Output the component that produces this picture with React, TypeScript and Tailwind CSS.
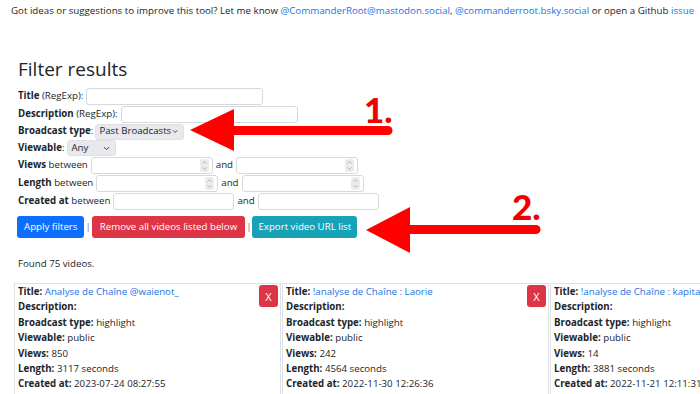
import React from 'react';
import { ChevronDown, ChevronUp } from 'lucide-react';

const link = 'text-[#1a73e8]';

const TextBox = ({ className }: { className: string }) => (
  <div className={`h-[17px] border border-[#d6d9dc] rounded-[3px] bg-white ${className}`} />
);

const NumberBox = ({ className }: { className: string }) => (
  <div className={`h-[17px] border border-[#d6d9dc] rounded-[3px] bg-white flex items-center justify-end pr-[3px] ${className}`}>
    <div className="w-[9px] h-[13px] rounded-[2px] bg-[#ececec] flex flex-col items-center justify-center text-[#8a8a8a]">
      <ChevronUp size={7} strokeWidth={2} />
      <ChevronDown size={7} strokeWidth={2} className="-mt-[1px]" />
    </div>
  </div>
);

const SelectBox = ({ value, className }: { value: string; className: string }) => (
  <div className={`h-[16px] rounded-[3px] bg-[#e9e9ed] border border-[#e0e0e4] flex items-center justify-between pl-[3px] pr-[4px] whitespace-nowrap ${className}`}>
    <span>{value}</span>
    <ChevronDown size={9} strokeWidth={2.5} className="text-[#333]" />
  </div>
);

interface Video {
  title: string;
  type: string;
  viewable: string;
  views: string;
  length: string;
  created: string;
}

const videos: Video[] = [
  { title: 'Analyse de Chaîne @waienot_', type: 'highlight', viewable: 'public', views: '850', length: '3117 seconds', created: '2023-07-24 08:27:55' },
  { title: '!analyse de Chaîne : Laorie', type: 'highlight', viewable: 'public', views: '242', length: '4564 seconds', created: '2022-11-30 12:26:36' },
  { title: '!analyse de Chaîne : kapitaine', type: 'highlight', viewable: 'public', views: '14', length: '3881 seconds', created: '2022-11-21 12:11:31' },
];

const VideoCard = ({ video }: { video: Video }) => (
  <div className="w-[267px] shrink-0 h-[130px] border border-[#dee2e6] pl-[3px] pr-[2px] leading-[15.4px] whitespace-nowrap overflow-hidden">
    <button className="float-right mt-[1px] w-[19px] h-[22px] rounded-[3px] bg-[#dc3545] text-white text-[11px] leading-none">X</button>
    <div><b>Title:</b> <span className={link}>{video.title}</span></div>
    <div><b>Description:</b></div>
    <div><b>Broadcast type:</b> {video.type}</div>
    <div><b>Viewable:</b> {video.viewable}</div>
    <div><b>Views:</b> {video.views}</div>
    <div><b>Length:</b> {video.length}</div>
    <div><b>Created at:</b> {video.created}</div>
  </div>
);

export default function App() {
  return (
    <div className="relative w-[700px] h-[394px] overflow-hidden bg-white text-[#212529] font-['Open_Sans',sans-serif] text-[9.7px]">
      <div className="pl-[18px] pt-[3px]">
        <p className="-ml-[7px] text-[9.72px] leading-[15px] whitespace-nowrap">
          Got ideas or suggestions to improve this tool? Let me know{' '}
          <a className={link}>@CommanderRoot@mastodon.social</a>,{' '}
          <a className={link}>@commanderroot.bsky.social</a> or open a Github <a className={link}>issue</a>
        </p>
        <h2 className="mt-[39px] text-[19px] leading-[25px]">Filter results</h2>

        <div className="mt-[5px] flex flex-col">
          <div className="flex items-center h-[18px]">
            <b>Title</b>&nbsp;(RegExp):
            <TextBox className="ml-[3px] w-[177px]" />
          </div>
          <div className="flex items-center h-[18px]">
            <b>Description</b>&nbsp;(RegExp):
            <TextBox className="ml-[3px] w-[177px]" />
          </div>
          <div className="flex items-center h-[17px]">
            <b>Broadcast type</b>:
            <SelectBox value="Past Broadcasts" className="ml-[2px] w-[89px]" />
          </div>
          <div className="flex items-center h-[16px]">
            <b>Viewable</b>:
            <SelectBox value="Any" className="ml-[3px] w-[49px]" />
          </div>
          <div className="flex items-center h-[18px]">
            <b>Views</b>&nbsp;between
            <NumberBox className="ml-[3px] w-[122px]" />
            <span className="mx-[3px]">and</span>
            <NumberBox className="w-[122px]" />
          </div>
          <div className="flex items-center h-[18px]">
            <b>Length</b>&nbsp;between
            <NumberBox className="ml-[3px] w-[122px]" />
            <span className="mx-[3px]">and</span>
            <NumberBox className="w-[122px]" />
          </div>
          <div className="flex items-center h-[18px]">
            <b>Created at</b>&nbsp;between
            <TextBox className="ml-[3px] w-[121px]" />
            <span className="mx-[3px]">and</span>
            <TextBox className="w-[121px]" />
          </div>
        </div>

        <div className="mt-[6px] flex items-center -ml-[1px]">
          <button className="h-[22px] px-[7px] rounded-[3px] bg-[#0d6efd] text-white">Apply filters</button>
          <span className="mx-[1px] text-[#777]">|</span>
          <button className="h-[22px] px-[8px] rounded-[3px] bg-[#dc3545] text-white">Remove all videos listed below</button>
          <span className="mx-[1px] text-[#777]">|</span>
          <button className="h-[22px] px-[6px] rounded-[3px] bg-[#17a2b8] text-white">Export video URL list</button>
        </div>

        <p className="mt-[18px] leading-[15px]">Found 75 videos.</p>
      </div>

      <div className="mt-[12px] ml-[14px] flex gap-[1px]">
        {videos.map((v) => (
          <VideoCard key={v.created} video={v} />
        ))}
      </div>

      <svg className="absolute inset-0 pointer-events-none" width="700" height="394" viewBox="0 0 700 394">
        <polygon points="190,130 234,109 234,151" fill="#ff0000" />
        <line x1="232" y1="130.5" x2="388" y2="130.5" stroke="#ff0000" strokeWidth="9" strokeLinecap="round" />
        <polygon points="366,230 410,207 410,253" fill="#ff0000" />
        <line x1="408" y1="229.5" x2="536" y2="229.5" stroke="#ff0000" strokeWidth="9" strokeLinecap="round" />
      </svg>
      <span className="absolute left-[364px] top-[92px] font-['Lato',sans-serif] font-black text-[35px] leading-none text-[#f00000]">1.</span>
      <span className="absolute left-[512px] top-[189px] font-['Lato',sans-serif] font-black text-[35px] leading-none text-[#f00000]">2.</span>
    </div>
  );
}
